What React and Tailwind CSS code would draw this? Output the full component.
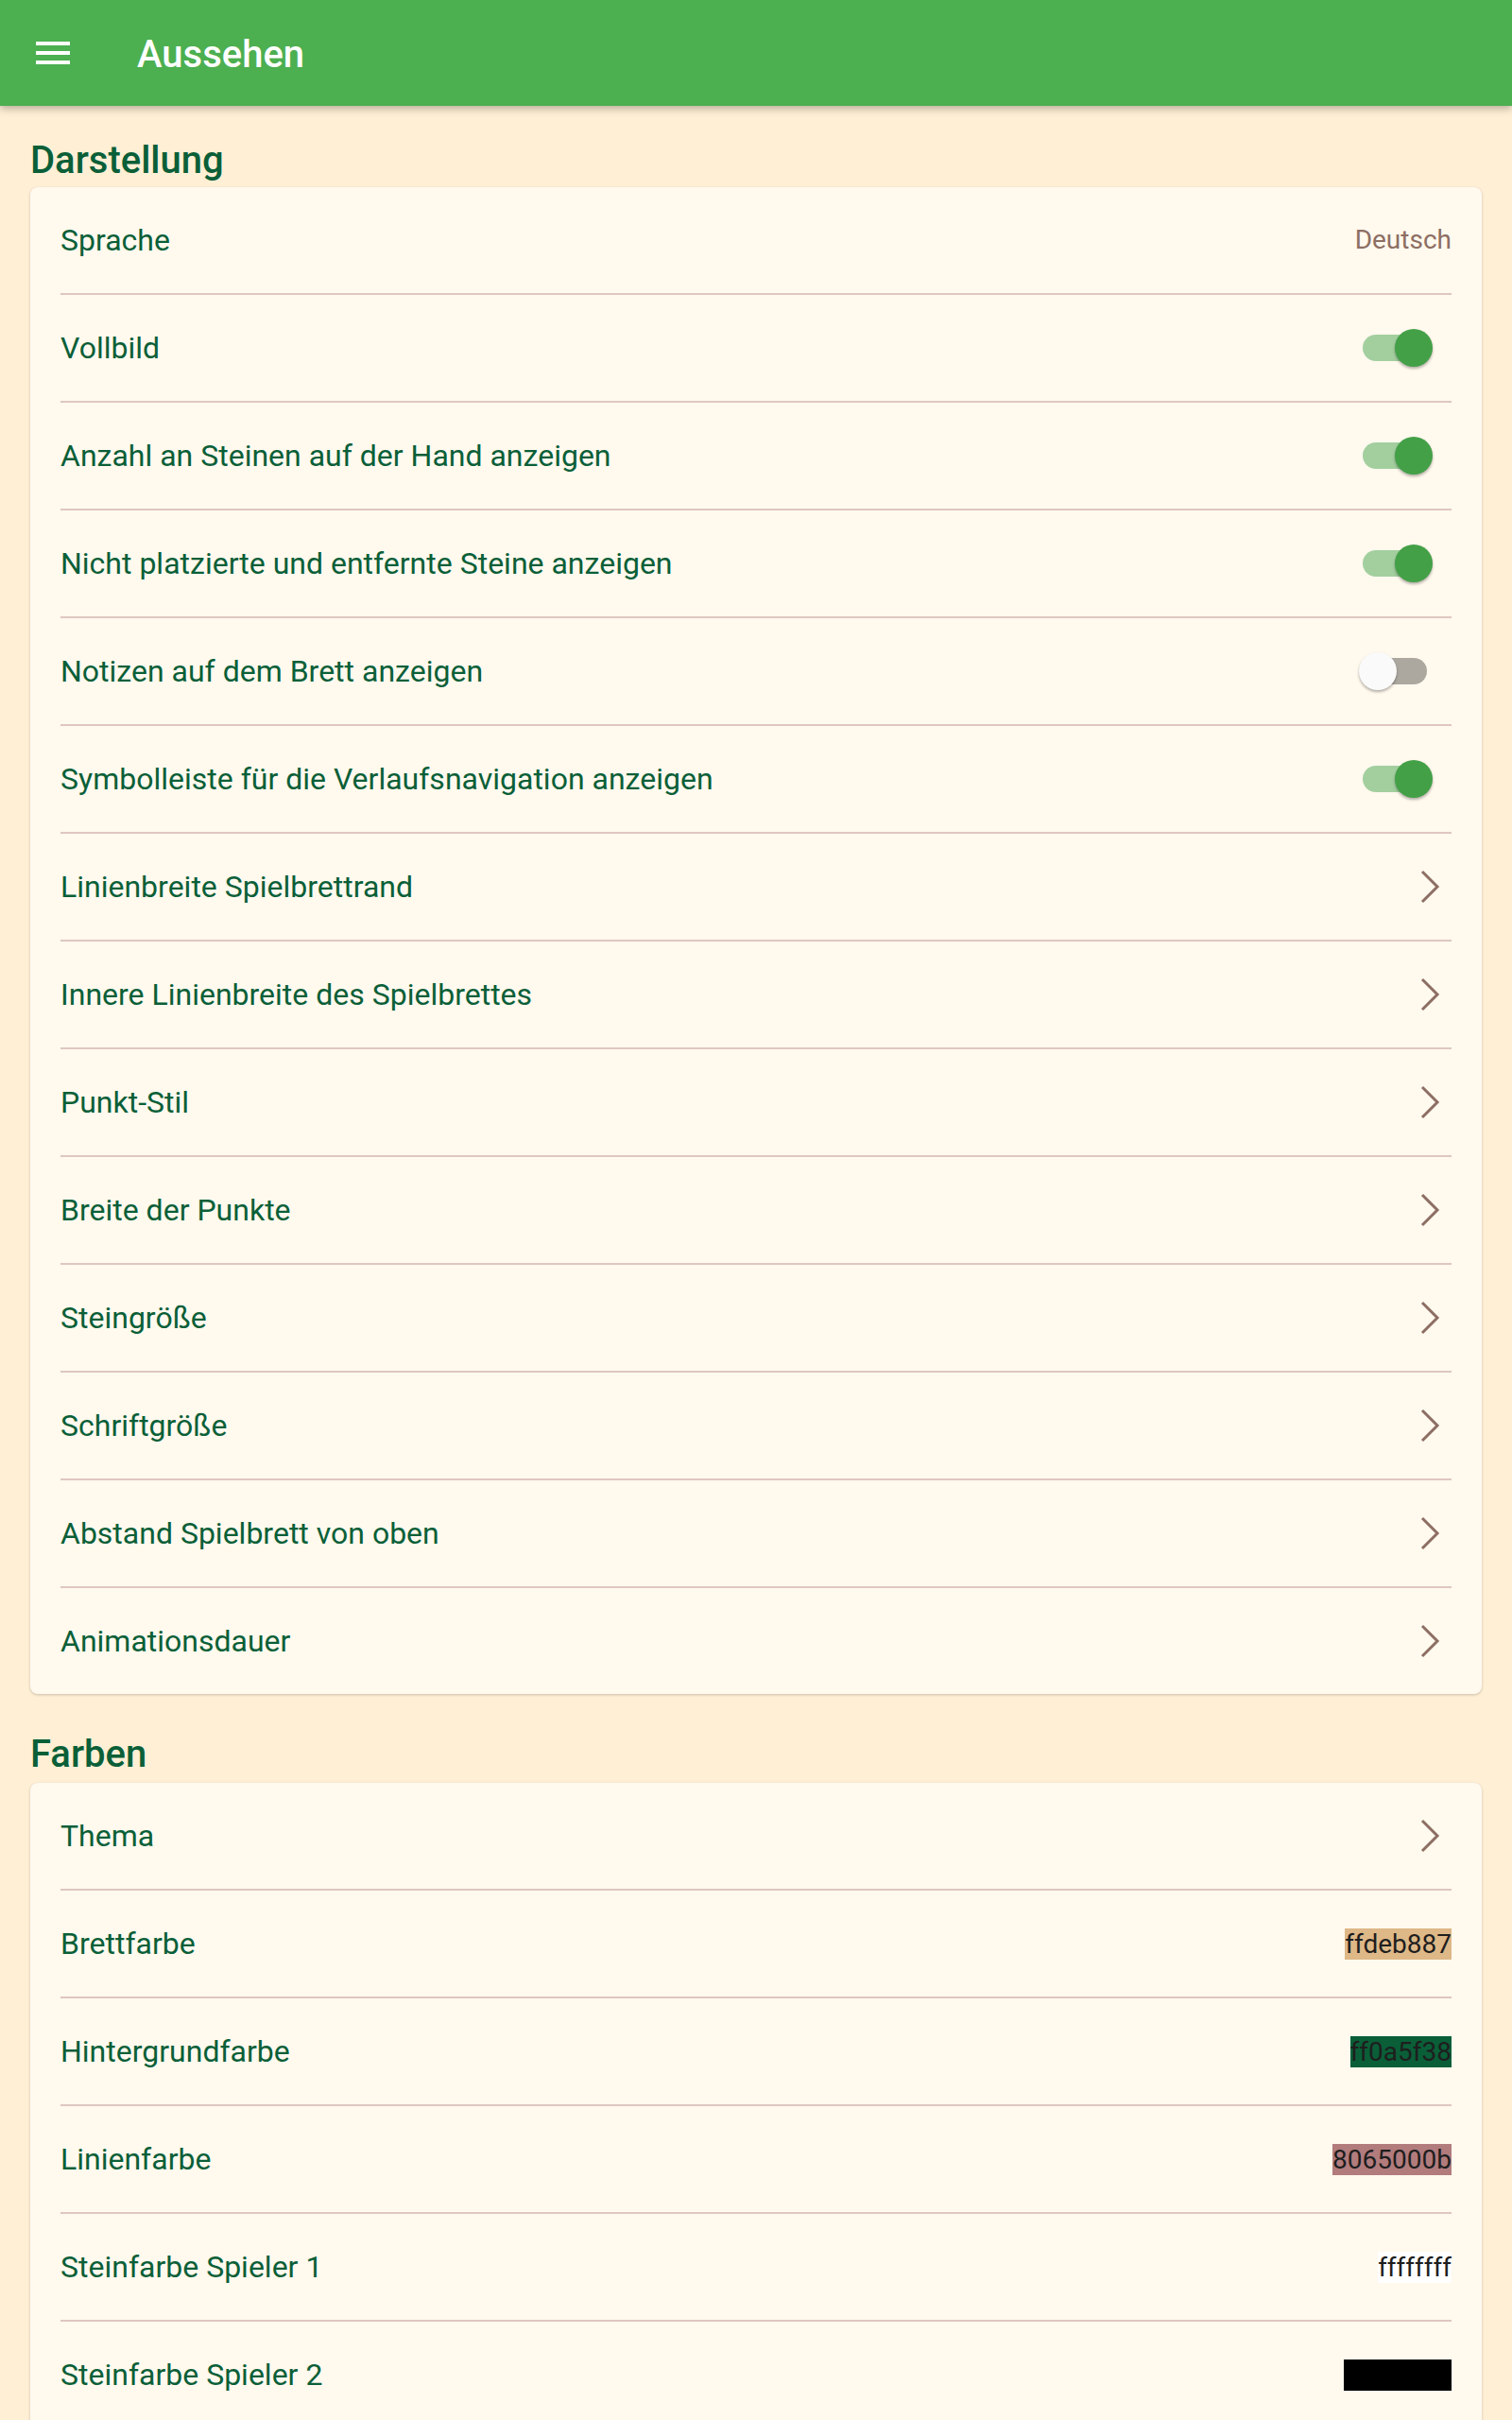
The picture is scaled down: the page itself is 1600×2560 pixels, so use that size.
import React from "react";

const darstellung = [
  { label: "Sprache", kind: "value", value: "Deutsch" },
  { label: "Vollbild", kind: "toggle", on: true },
  { label: "Anzahl an Steinen auf der Hand anzeigen", kind: "toggle", on: true },
  { label: "Nicht platzierte und entfernte Steine anzeigen", kind: "toggle", on: true },
  { label: "Notizen auf dem Brett anzeigen", kind: "toggle", on: false },
  { label: "Symbolleiste für die Verlaufsnavigation anzeigen", kind: "toggle", on: true },
  { label: "Linienbreite Spielbrettrand", kind: "nav" },
  { label: "Innere Linienbreite des Spielbrettes", kind: "nav" },
  { label: "Punkt-Stil", kind: "nav" },
  { label: "Breite der Punkte", kind: "nav" },
  { label: "Steingröße", kind: "nav" },
  { label: "Schriftgröße", kind: "nav" },
  { label: "Abstand Spielbrett von oben", kind: "nav" },
  { label: "Animationsdauer", kind: "nav" },
];

const farben = [
  { label: "Thema", kind: "nav" },
  { label: "Brettfarbe", kind: "color", value: "ffdeb887", bg: "bg-[#deb887] text-[#1e1e1e]" },
  { label: "Hintergrundfarbe", kind: "color", value: "ff0a5f38", bg: "bg-[#0a5f38] text-[#1e1e1e]" },
  { label: "Linienfarbe", kind: "color", value: "8065000b", bg: "bg-[rgba(101,0,11,0.5)] text-[#1e1e1e]" },
  { label: "Steinfarbe Spieler 1", kind: "color", value: "ffffffff", bg: "bg-white text-[#1e1e1e]" },
  { label: "Steinfarbe Spieler 2", kind: "color", value: "ff000000", bg: "bg-black text-black" },
];

const Toggle = ({ on }) => (
  <div className="relative w-[68px] h-[40px] mr-[26px] flex items-center">
    <div
      className={`w-[68px] h-[28px] rounded-full ${on ? "bg-[#a3cf9f]" : "bg-[#aca8a0]"}`}
    />
    <div
      className={`absolute top-0 w-[40px] h-[40px] rounded-full shadow-[0_2px_3px_rgba(0,0,0,0.3)] ${
        on ? "left-[34px] bg-[#43a047]" : "left-[-4px] bg-[#fafafa]"
      }`}
    />
  </div>
);

const Chevron = () => (
  <svg width="24" height="36" viewBox="0 0 24 36" className="mr-[12px]">
    <polyline
      points="5,2 21,18 5,34"
      fill="none"
      stroke="#8d6e63"
      strokeWidth="3"
    />
  </svg>
);

const Row = ({ item, last }) => (
  <div className="px-[32px]">
    <div
      className={`h-[112px] flex items-center justify-between ${
        last ? "" : "border-b-2 border-[#dfc7c0]"
      } box-content`}
    >
      <span className="text-[32px] text-[#0a5f38]">{item.label}</span>
      {item.kind === "value" && (
        <span className="text-[28px] text-[#8d6e63]">{item.value}</span>
      )}
      {item.kind === "toggle" && <Toggle on={item.on} />}
      {item.kind === "nav" && <Chevron />}
      {item.kind === "color" && (
        <span className={`text-[28px] leading-[33px] ${item.bg}`}>{item.value}</span>
      )}
    </div>
  </div>
);

const Section = ({ title, items, first }) => (
  <div>
    <h2
      className={`${first ? "pt-[38px] pb-[8px]" : "pt-[36px] pb-[10px]"} px-[32px] text-[40px] leading-none font-medium text-[#0a5f38]`}
    >
      {title}
    </h2>
    <div className="mx-[32px] mb-[8px] rounded-[8px] bg-[#fff9ee] shadow-[0_1px_3px_rgba(0,0,0,0.22)]">
      {items.map((item, i) => (
        <Row key={item.label} item={item} last={i === items.length - 1} />
      ))}
    </div>
  </div>
);

const App = () => {
  return (
    <div
      className="min-h-[2560px] bg-[#ffefd5]"
      style={{ fontFamily: "Roboto, 'Noto Sans', sans-serif" }}
    >
      <header className="relative z-10 h-[112px] bg-[#4caf50] flex items-center shadow-[0_3px_8px_rgba(0,0,0,0.28)]">
        <svg width="48" height="48" viewBox="0 0 24 24" className="ml-[32px]">
          <path d="M3 18h18v-2H3v2zm0-5h18v-2H3v2zm0-7v2h18V6H3z" fill="#fff" />
        </svg>
        <h1 className="ml-[65px] mt-[4px] text-[40px] font-medium text-white">Aussehen</h1>
      </header>
      <Section title="Darstellung" items={darstellung} first />
      <Section title="Farben" items={farben} />
    </div>
  );
};

export default App;
